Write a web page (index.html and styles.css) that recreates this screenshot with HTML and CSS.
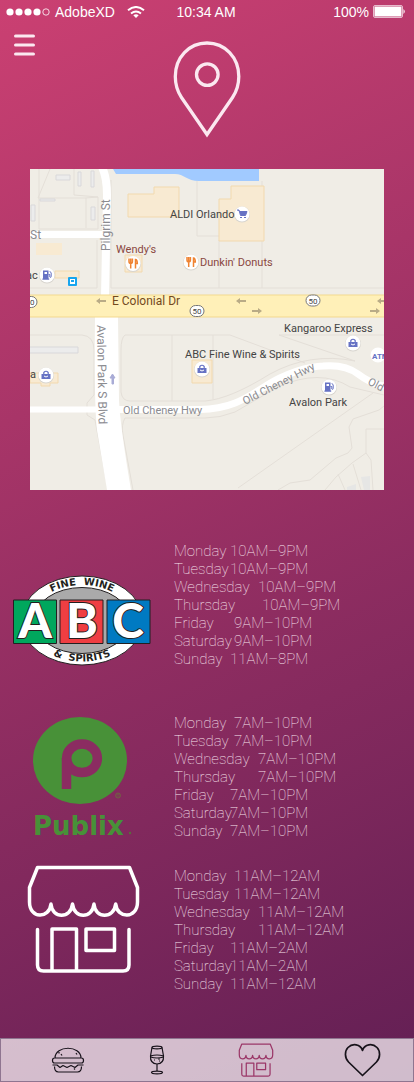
FILE: index.html
```html
<!DOCTYPE html>
<html lang="en">
<head>
<meta charset="utf-8">
<meta name="viewport" content="width=device-width, initial-scale=1">
<title>Store locations</title>
<link rel="stylesheet" href="styles.css">
</head>
<body>
<div class="status">
  <div class="carrier">
    <svg width="44" height="10" viewBox="0 0 44 10" aria-hidden="true"><g fill="#fff"><circle cx="4" cy="5" r="3.6"/><circle cx="13" cy="5" r="3.6"/><circle cx="22" cy="5" r="3.6"/><circle cx="31" cy="5" r="3.6"/></g><circle cx="40" cy="5" r="3.2" fill="none" stroke="#fff" stroke-width=".8"/></svg>
    <span>AdobeXD</span>
    <svg class="wifi" width="18" height="12" viewBox="0 0 18 12" fill="none" stroke="#fff" aria-hidden="true"><path d="M1 4.2Q9-2.2 17 4.2" stroke-width="2"/><path d="M4 7.5Q9 3.5 14 7.5" stroke-width="2"/><path d="M6.3 9.3Q9 7.3 11.7 9.3L9 12Z" fill="#fff" stroke="none"/></svg>
  </div>
  <span>10:34 AM</span>
  <div class="power">
    <span>100%</span>
    <svg width="33" height="14" viewBox="0 0 33 14" aria-hidden="true"><rect x=".5" y=".5" width="29" height="12" rx="1.5" fill="none" stroke="#fff" stroke-opacity=".65"/><rect x="1.5" y="1.5" width="27" height="10" fill="#fff"/><path d="M30.5 4Q33 6.5 30.500 9Z" fill="#fff"/></svg>
  </div>
</div>
<header class="top">
  <button class="menu" type="button" aria-label="Menu"><svg width="22" height="22" viewBox="0 0 22 22" stroke="#fbe8f0" stroke-width="3" stroke-linecap="round" aria-hidden="true"><path d="M1.500 2H19.500M1.500 11H19.500M1.500 20H19.500"/></svg></button>
  <svg class="pin" width="70" height="98" viewBox="172 40 70 98" fill="none" stroke="#fbe8f0" stroke-width="3.300" aria-hidden="true"><path d="M207 134.500L181.500 97.500C177.500 91.500 175.300 85 175.300 76.500C175.300 57.500 189 43 207 43S238.800 57.500 238.800 76.500C238.800 85 236.500 91.500 232.500 97.500Z"/><circle cx="207.300" cy="74.600" r="10.800"/></svg>
</header>
<main>
<svg class="map" viewBox="30 169 354 321" role="img" aria-label="Map of stores near E Colonial Dr">
  <defs>
    <g id="bag"><circle r="8" fill="#d8d5cf" cy=".6"/><circle r="7.500" fill="#fff"/><path d="M-4.500-1H4.500V4H-4.500Z" fill="#6672c4"/><path d="M-2.200-1V-2.500Q0-5 2.200-2.500V-1" fill="none" stroke="#6672c4" stroke-width="1.200"/><path d="M-2 1Q0 3 2 1" fill="none" stroke="#fff"/></g>
    <g id="food"><circle r="8" fill="#d8d5cf" cy=".6"/><circle r="7.500" fill="#fff"/><path d="M-4-5V-2Q-4 0-2.300 0V5M-2.300-5V0M-.6-5V-2Q-.6 0-2.300 0M2.500 5V-4Q4.300-4 4.300 0H2.500" fill="none" stroke="#ef8332" stroke-width="1.500"/></g>
    <g id="pump"><circle r="8" fill="#d8d5cf" cy=".6"/><circle r="7.500" fill="#fff"/><path d="M-4-4.500H1.500V3.500H2.200V4.800H-4.600V3.500H-4Z" fill="#6672c4"/><path d="M-2.500-3H0V-1H-2.500Z" fill="#fff"/><path d="M1.500-.5H2.800V2Q4 3 4.200 1.500V-2L2.800-3.800" fill="none" stroke="#6672c4"/></g>
    <g id="shield"><rect x="-7" y="-5.500" width="14" height="11" rx="5.500" fill="#fff" stroke="#777"/><text y="3" text-anchor="middle" class="small">50</text></g>
    <path id="arrow" d="M-5 0L-1-3V-1H5V1H-1V3Z" fill="#b9ab86"/>
  </defs>
  <rect x="30" y="169" width="354" height="321" fill="#f0ede6"/>
  <g fill="none" stroke="#e4dfd8">
    <path d="M39 169V229H98V197M50 169L38 198H85L98 197M74 169V195L98 197M86 198V228M30 288H97V240M111 180V288H384M262 181V288M219 236H197V160M219 240V288"/>
    <path d="M30 335H82Q94 336 94 350V395L87 403V415L95 420L108 490M125 335H230L305 363M125 335Q121 338 121 350V392Q122 401 130 401H205Q230 399 270 374Q310 352 355 361L279 335H384M172 335V401M213 335V399M384 395L350 387Q320 368 278 387L235 412Q220 418 205 418H125Q121 425 123 435L133 490M373 393L238 488"/>
    <path d="M384 406L379 410L353 419L349 427L352 448L348 453L336 458L310 480L290 483L278 490M384 429H366V453L371 460L373 490M366 453L352 463L336 477L325 490M338 474L345 490M353 464L361 490"/>
  </g>
  <g fill="#ececec" stroke="#d9d8da"><path d="M78 172h3v14h-3zM91 171h3v16h-3zM56 175h14v5H56zM40 199h15v2H40zM31 205h4v16h-4zM91 207h4v13h-4zM20 347h58v6H20z"/></g>
  <path d="M347 490V487L356 484V490ZM361 477L370 476V490H364Z" fill="#e6e6e5"/>
  <g fill="#f8ead2" stroke="#f2d9ae"><path d="M128 194H154V187H179V217H128ZM231 186H264V241H219V199H231ZM55 271H79V278H55ZM30 373H58V383H50V386H41V383H30ZM192 360H212V383H192ZM125 255H142V272H125Z"/><path d="M36 243H62V255H36Z" stroke="none"/></g>
  <path d="M113 169L116 174H175C184 174 187 181 199 181H259V169Z" fill="#a1caff"/>
  <g fill="none" stroke="#fff"><path d="M30 234.500H105" stroke-width="7"/><path d="M101 165Q107 176 107 195L105 297" stroke-width="8"/><path d="M30 409.500H96" stroke-width="6"/><path d="M115 409.500H200C240 409 255 390 280 378S323 366 323 366Q345 364 358 374T384 386" stroke-width="7"/></g>
  <path d="M95 316H118L119 400Q120 425 131 490H107L97 430Q94 405 95 316Z" fill="#fff"/>
  <path d="M29 295H385V317H29Z" fill="#fff0b8" stroke="#f3d98f"/>
  <use href="#arrow" x="101" y="301"/><use href="#arrow" x="241" y="301"/><use href="#arrow" x="382" y="301"/>
  <use href="#arrow" transform="translate(257 311) rotate(180)"/><use href="#arrow" transform="translate(375 311) rotate(180)"/>
  <path d="M112 384V378H110L112.500 374L115 378H113.500V384Z" fill="#a9acd6" stroke="#a9acd6"/>
  <use href="#shield" x="30" y="302"/><use href="#shield" x="197" y="311"/><use href="#shield" x="313" y="300.500"/>
  <use href="#pump" x="47" y="275"/><use href="#pump" x="329" y="387"/><use href="#bag" x="46" y="375"/><use href="#bag" x="202" y="369"/><use href="#bag" x="353" y="343"/><use href="#food" x="133" y="263.500"/><use href="#food" x="191" y="262"/>
  <circle cx="242" cy="214.500" r="8" fill="#d8d5cf"/><circle cx="242" cy="214" r="7.500" fill="#fff"/><path d="M237 210H239L240.500 215.500H245.500L247 211.500H239.500" fill="#6672c4" stroke="#6672c4"/><path d="M240 217.500H246" stroke="#6672c4" stroke-dasharray="2"/>
  <rect x="68" y="277" width="9" height="9" rx="1" fill="#17a5ef"/><path d="M70 279H75V284H70Z" fill="#fff"/><path d="M71 280H74V282H71Z" fill="#17a5ef"/>
  <circle cx="378" cy="355" r="7.500" fill="#fff"/><text x="372" y="359" class="atm">ATM</text>
  <g class="label">
    <text x="170" y="217.500">ALDI Orlando</text><text x="284" y="332">Kangaroo Express</text><text x="185" y="358">ABC Fine Wine &amp; Spirits</text><text x="289" y="405.500">Avalon Park</text><text x="26" y="279">ac</text><text x="30" y="378">a</text>
    <g class="dining"><text x="116" y="253">Wendy's</text><text x="200" y="266">Dunkin' Donuts</text></g>
    <g class="road"><text x="30" y="238.500">St</text><text transform="translate(110 251) rotate(-90)">Pilgrim St</text><text transform="translate(97 325) rotate(89)">Avalon Park S Blvd</text></g>
    <g class="lane"><text x="123" y="413.500">Old Cheney Hwy</text><text transform="translate(245 405) rotate(-27)">Old Cheney Hwy</text><text transform="translate(367 384) rotate(28)">Old</text></g>
    <text x="112" y="305" class="main-road">E Colonial Dr</text>
  </g>
</svg>
<section class="store">
  <svg class="logo" width="174" height="126" viewBox="0 542 174 126" role="img" aria-label="ABC Fine Wine and Spirits">
    <defs><path id="arc-top" d="M39 601.400A51 35.500 0 0 1 125 601.400"/><path id="arc-bottom" d="M36 644.300A56.500 41 0 0 0 128 644.300"/></defs>
    <ellipse cx="82" cy="620.500" rx="61" ry="44.500" fill="#fff" stroke="#231f20"/><ellipse cx="82" cy="620.500" rx="48" ry="33" fill="#aaa" stroke="#231f20"/>
    <g class="arc" text-anchor="middle"><text><textPath href="#arc-top" startOffset="50%">FINE&#160; WINE</textPath></text><text><textPath href="#arc-bottom" startOffset="50%">&amp;&#160; SPIRITS</textPath></text></g>
    <g stroke="#231f20"><path d="M13.500 600H56.500V643.500H13.500Z" fill="#00a75d"/><path d="M60 600H103V643.500H60Z" fill="#ef3e42"/><path d="M107 600H150V643.500H107Z" fill="#007ac2"/></g>
    <g class="abc" text-anchor="middle"><text x="35" y="638">A</text><text x="82" y="638">B</text><text x="128" y="638">C</text></g>
  </svg>
  <table class="hours">
    <tr><th class="t1">Monday</th><td>10AM–9PM</td></tr><tr><th class="t1">Tuesday</th><td>10AM–9PM</td></tr><tr><th class="t3">Wednesday</th><td>10AM–9PM</td></tr><tr><th class="t4">Thursday</th><td>10AM–9PM</td></tr><tr><th class="t2">Friday</th><td>9AM–10PM</td></tr><tr><th class="t2">Saturday</th><td>9AM–10PM</td></tr><tr><th class="t1">Sunday</th><td>11AM–8PM</td></tr>
  </table>
</section>
<section class="store">
  <svg class="logo" width="174" height="126" viewBox="0 714 174 126" role="img" aria-label="Publix">
    <ellipse cx="80" cy="760.500" rx="47" ry="43.500" fill="#489138"/>
    <g class="mark" fill="none" stroke-width="9.500"><ellipse cx="82" cy="758.300" rx="15.400" ry="14.300"/><path d="M66.500 789V758"/></g>
    <circle cx="118" cy="795.500" r="2.500" fill="none" stroke="#716143"/><path d="M117 797V794H119V797" fill="none" stroke="#716143" stroke-width=".7"/><circle cx="130" cy="833" r="1.200" fill="#596d3d"/>
    <text x="33" y="835" class="publix">Publix</text>
  </svg>
  <table class="hours">
    <tr><th class="t2">Monday</th><td>7AM–10PM</td></tr><tr><th class="t2">Tuesday</th><td>7AM–10PM</td></tr><tr><th class="t3">Wednesday</th><td>7AM–10PM</td></tr><tr><th class="t3">Thursday</th><td>7AM–10PM</td></tr><tr><th class="t1">Friday</th><td>7AM–10PM</td></tr><tr><th class="t1">Saturday</th><td>7AM–10PM</td></tr><tr><th class="t1">Sunday</th><td>7AM–10PM</td></tr>
  </table>
</section>
<section class="store">
  <svg class="logo" width="174" height="126" viewBox="0 867 174 126" role="img" aria-label="Store">
    <g fill="none" stroke="#fff" stroke-width="3.500" stroke-linecap="round" stroke-linejoin="round"><path d="M37.500 867.500H129.500L137.500 887.500V902C137.500 919 117 919 115.700 904C114 919 95 919 94 904C92.500 919 74 919 72.500 904C71 919 52 919 51 904C49.500 919 29.500 919 29.500 902V887.500Z"/><path d="M37.500 929.500V965Q37.500 971 43.500 971H123Q129 971 129 965V929.500M52 971V929H76.500V971M86 929H114.500V950.500H86Z"/></g>
  </svg>
  <table class="hours">
    <tr><th class="t2">Monday</th><td>11AM–12AM</td></tr><tr><th class="t2">Tuesday</th><td>11AM–12AM</td></tr><tr><th class="t3">Wednesday</th><td>11AM–12AM</td></tr><tr><th class="t3">Thursday</th><td>11AM–12AM</td></tr><tr><th class="t1">Friday</th><td>11AM–2AM</td></tr><tr><th class="t1">Saturday</th><td>11AM–2AM</td></tr><tr><th class="t1">Sunday</th><td>11AM–12AM</td></tr>
  </table>
</section>
</main>
<nav class="tabs">
  <a href="#food" aria-label="Food"><svg width="34" height="28" viewBox="50 1046 34 28"><path d="M54 1058C54 1045 80 1045 80 1058M53.500 1058H80.500Q82.500 1058 82.500 1060.500T80.500 1063H53.500Q51.500 1063 51.500 1060.500T53.500 1058ZM51.500 1065H56L59 1067.500L62 1065.500L66 1067.500L70 1065.500L74 1067.500L77 1065H82.500M53.500 1066.500Q53.500 1072 57.500 1072H76.500Q80.500 1072 80.500 1066.500"/><path d="M60 1054L61 1055.500M58 1052V1053.500M75 1053L76 1054.500M73 1068.500L74 1069.500"/></svg></a>
  <a href="#drinks" aria-label="Drinks"><svg width="16" height="30" viewBox="149 1045 16 30"><ellipse cx="157" cy="1047.500" rx="5" ry="1.300"/><path d="M152 1047.500L150.500 1056Q150 1063.500 157 1064Q164 1063.500 163.500 1056L162 1047.500M150.500 1056Q157 1054 163.500 1056M150.500 1057Q157 1059 163.500 1057M157 1064V1071"/><ellipse cx="157" cy="1072.500" rx="5.500" ry="1.300"/><path d="M154 1060H155M158 1059H160M159 1061H160"/></svg></a>
  <a class="active" href="#stores" aria-label="Stores" aria-current="page"><svg width="36" height="34" viewBox="26 864 115 110"><path d="M37.500 867.500H129.500L137.500 887.500V902C137.500 919 117 919 115.700 904C114 919 95 919 94 904C92.500 919 74 919 72.500 904C71 919 52 919 51 904C49.500 919 29.500 919 29.500 902V887.500ZM37.500 929.500V965Q37.500 971 43.500 971H123Q129 971 129 965V929.500M52 971V929H76.500V971M86 929H114.500V950.500H86Z"/></svg></a>
  <a class="heart" href="#favourites" aria-label="Favourites"><svg width="37" height="34" viewBox="345 1043 37 34"><path d="M363.500 1075.500L349.500 1062C345.500 1058 345.500 1051 349 1047.500C353.500 1043 361.500 1044 363.500 1050.500C365.500 1044 373.500 1043 378 1047.500C381.500 1051 381.500 1058 377.500 1062Z"/></svg></a>
</nav>
</body>
</html>
```
FILE: styles.css
```css
* { box-sizing: border-box; }
body {
  margin: 0;
  min-height: 100vh;
  display: flex;
  flex-direction: column;
  background: linear-gradient(155deg, #cb4072, #621f54);
  color: #fff;
  font-family: "Liberation Sans", Arial, sans-serif;
}
svg { display: block; }
.status {
  display: grid;
  grid-template-columns: 1fr auto 1fr;
  align-items: center;
  height: 24px;
  padding: 0 8px 0 6px;
  font-size: 14px;
  line-height: 16px;
}
.carrier, .power { display: flex; align-items: center; }
.carrier { gap: 5px; }
.wifi { margin-left: 7px; }
.power { justify-content: flex-end; gap: 4px; }
.top {
  display: grid;
  grid-template-columns: 1fr auto 1fr;
  align-items: start;
  height: 145px;
  padding: 10px 14px 0;
}
.menu { justify-self: start; padding: 0; border: 0; background: none; cursor: pointer; }
.pin { margin-top: 6px; }
.map { width: calc(100% - 60px); margin: 0 30px 52px; font-family: Roboto, sans-serif; }
.label { font-size: 11px; fill: #444; }
.dining { fill: #8a4842; }
.road { font-size: 12px; fill: #8b8b90; }
.lane { font-size: 11px; fill: #8b8b90; }
.main-road { font-size: 12px; fill: #744a1e; }
.small { font-size: 8px; fill: #444; }
.atm { font-size: 8px; font-weight: 700; fill: #6672c4; }
.store {
  display: grid;
  grid-template-columns: 174px 1fr;
  align-items: center;
  margin-bottom: 46px;
}
.store + .store { margin-bottom: 27px; }
.logo { overflow: visible; }
.abc {
  font: 900 48px Lato, sans-serif;
  fill: #fff;
  stroke: #231f20;
  stroke-width: 2px;
  paint-order: stroke;
}
.arc { font: 700 10px "DejaVu Sans", sans-serif; fill: #231f20; }
.publix { font: 700 26px "DejaVu Sans", sans-serif; fill: #489138; }
.mark { stroke: #8b2c61; }
.hours {
  display: block;
  border-spacing: 0;
  color: #f8e4ee;
  font: 100 15px/18px Roboto, sans-serif;
}
.hours tbody { display: block; }
.hours tr { display: flex; }
.hours th { padding: 0; font-weight: inherit; text-align: left; white-space: nowrap; }
.hours td { padding: 0; white-space: nowrap; }
.t1 { width: 56px; }
.t2 { width: 60px; }
.t3 { width: 84px; }
.t4 { width: 88px; }
.tabs {
  display: grid;
  grid-template-columns: 134fr 46fr 152fr 63fr;
  align-items: center;
  height: 44px;
  margin-top: auto;
  padding-right: 19px;
  border: 1px solid #8f7590;
  background: rgba(255, 255, 255, .7);
}
.tabs a { display: flex; justify-content: center; color: #17121a; }
.tabs svg { fill: none; stroke: currentColor; stroke-width: 1.2px; stroke-linejoin: round; }
.tabs .active { color: #9b3768; }
.tabs .active svg { stroke-width: 4px; }
.tabs .heart svg { stroke-width: 1.7px; }
```
